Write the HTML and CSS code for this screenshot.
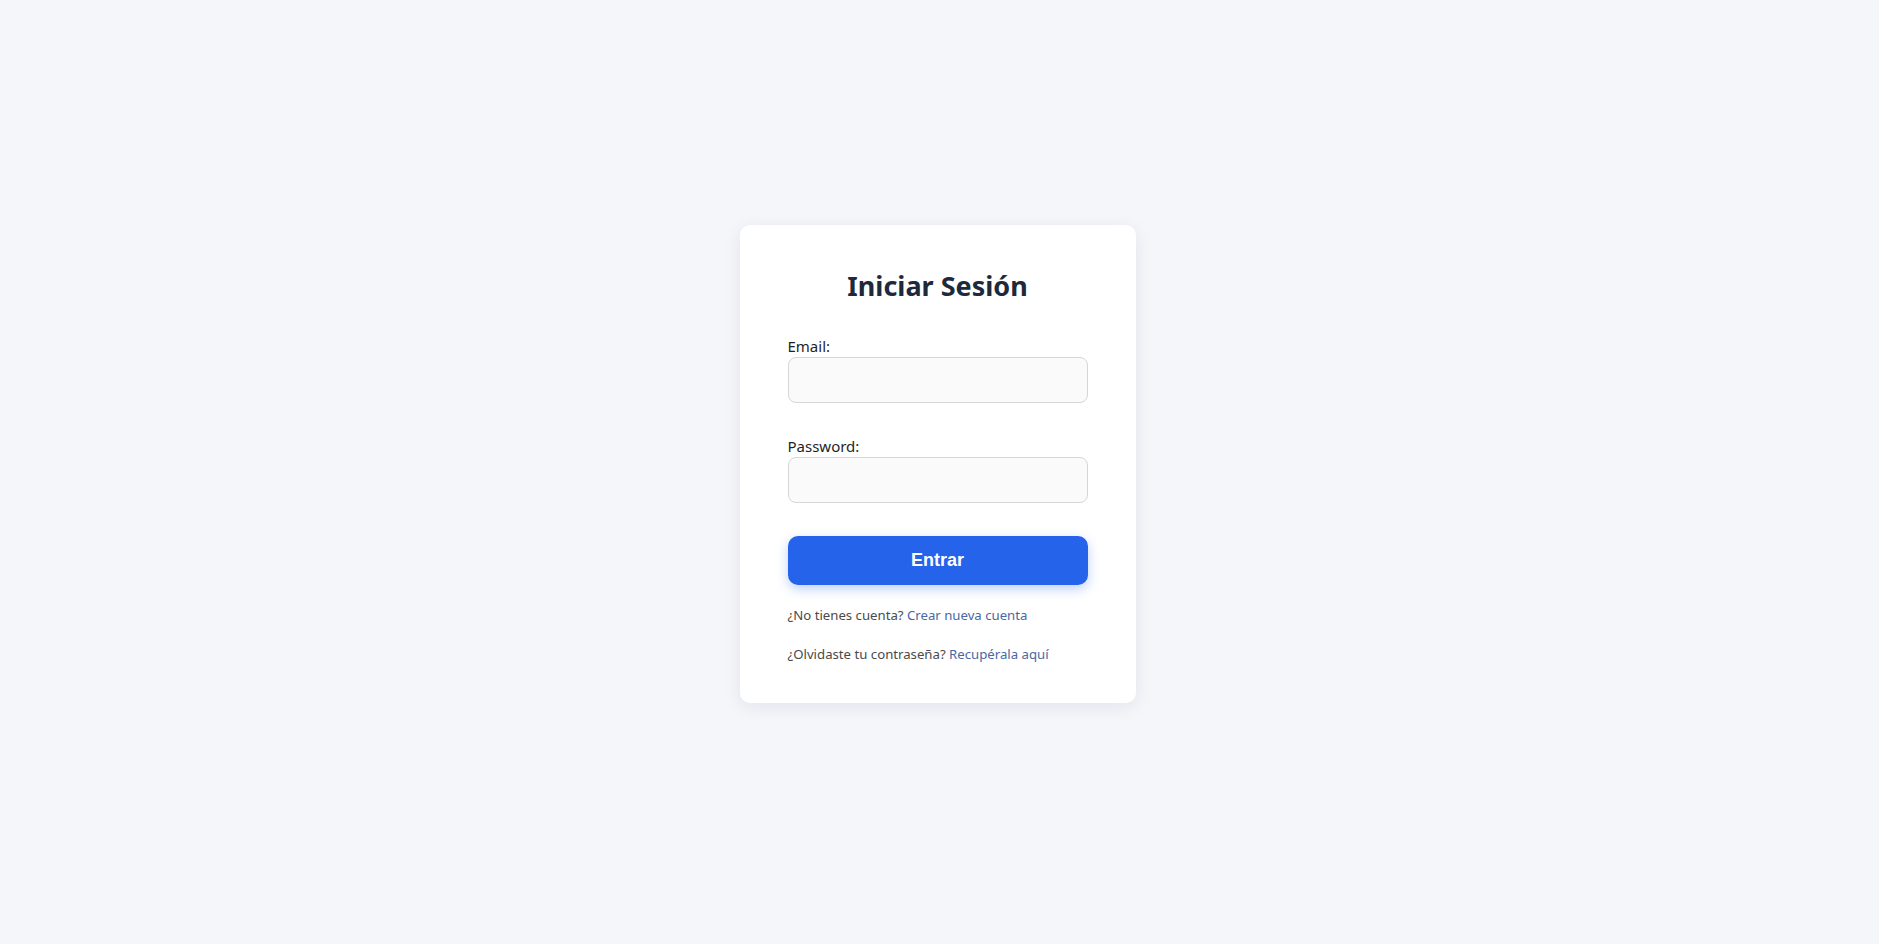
FILE: index.html
```html
<!DOCTYPE html>
<html lang="es">
<head>
<meta charset="utf-8">
<title>Iniciar Sesión</title>
<link rel="stylesheet" href="styles.css">
</head>
<body>
<main class="page">
  <div class="card">
    <h1 class="title">Iniciar Sesión</h1>
    <form class="form">
      <div class="field">
        <label class="label" for="email">Email:</label>
        <input class="input" id="email" type="email">
      </div>
      <div class="field">
        <label class="label" for="password">Password:</label>
        <input class="input" id="password" type="password">
      </div>
      <button class="btn" type="button">Entrar</button>
    </form>
    <div class="notes">
      <p class="note">¿No tienes cuenta? <a class="link" href="#">Crear nueva cuenta</a></p>
      <p class="note">¿Olvidaste tu contraseña? <a class="link" href="#">Recupérala aquí</a></p>
    </div>
  </div>
</main>
</body>
</html>
```
FILE: styles.css
```css
::-webkit-scrollbar { width: 4px; }
::-webkit-scrollbar-track { background: #f0f0f0; }
::-webkit-scrollbar-thumb { background: #c1c1c1; }
::-webkit-scrollbar-button:single-button { display: block; height: 17px; background: #f0f0f0; }

html, body {
  margin: 0;
  padding: 0;
}

body {
  background: #f5f6fa;
  font-family: "Noto Sans", "Open Sans", sans-serif;
  color: #1f1f1f;
}

.page {
  box-sizing: border-box;
  min-height: 1484px;
  padding: 225px 4px 0 0;
  display: flex;
  justify-content: center;
  align-items: flex-start;
}

.card {
  width: 300px;
  padding: 44px 48px 39px;
  background: #fff;
  border-radius: 10px;
  box-shadow: 0 4px 18px rgba(20, 30, 60, 0.08);
  display: flex;
  flex-direction: column;
}

.title {
  margin: 0 0 33px;
  font-size: 27px;
  line-height: 34px;
  font-weight: 700;
  color: #1e293b;
  text-align: center;
}

.form {
  display: flex;
  flex-direction: column;
  gap: 33px;
  margin: 0;
}

.field {
  display: flex;
  flex-direction: column;
}

.label {
  font-size: 15px;
  line-height: 20px;
  margin-bottom: 1px;
  color: #1f1f1f;
}

.input {
  box-sizing: border-box;
  width: 100%;
  height: 46px;
  margin: 0;
  padding: 0 12px;
  border: 1px solid #d4d6da;
  border-radius: 8px;
  background: #fafafa;
  font-family: inherit;
  font-size: 15px;
}

.btn {
  height: 49px;
  margin: 0;
  border: 0;
  border-radius: 10px;
  background: #2563eb;
  color: #fff;
  font-family: "Liberation Sans", Arial, sans-serif;
  font-weight: 700;
  font-size: 18px;
  box-shadow: 0 4px 12px rgba(37, 99, 235, 0.3);
}

.notes {
  margin-top: 20px;
  display: flex;
  flex-direction: column;
  gap: 19px;
}

.note {
  margin: 0;
  font-size: 13.2px;
  line-height: 20px;
  color: #4a4a4a;
}

.link {
  color: #4a68a3;
  text-decoration: none;
}
```
